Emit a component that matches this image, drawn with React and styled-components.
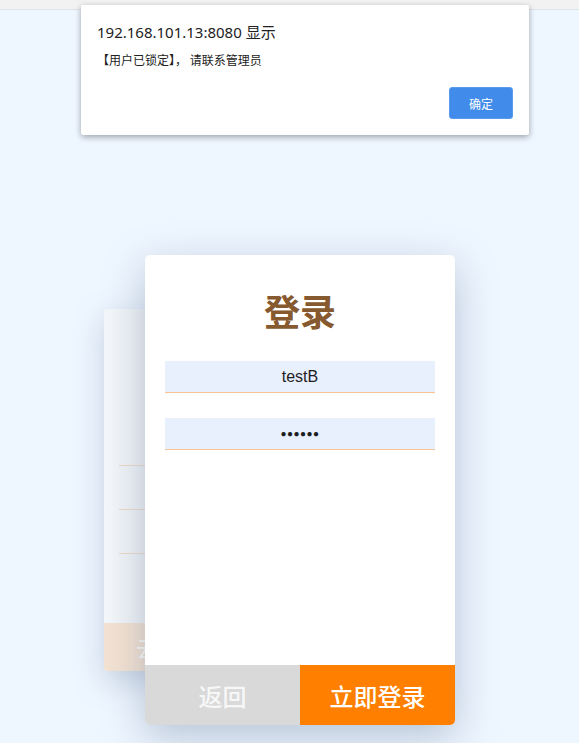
import styled, { createGlobalStyle } from "styled-components";

const GlobalStyle = createGlobalStyle`
  html, body {
    margin: 0;
    padding: 0;
    background: #eef6ff;
    font-family: "Noto Sans CJK SC", "Noto Sans", sans-serif;
  }
`;

const Page = styled.div`
  position: relative;
  width: 579px;
  height: 743px;
  overflow: hidden;
  background: #eef6ff;
`;

const TopStrip = styled.div`
  height: 9px;
  background: #f2f2f2;
  border-bottom: 1px solid #dfe3e8;
`;

const Stage = styled.div`
  display: grid;
  padding: 245px 0 0 104px;
`;

const BackCard = styled.div`
  grid-area: 1 / 1;
  margin-top: 54px;
  width: 300px;
  height: 362px;
  border-radius: 4px;
  overflow: hidden;
  display: flex;
  flex-direction: column;
  background: linear-gradient(90deg, #f4f7fa 0%, #dfe4e9 40%, #dce1e6 100%);
  box-shadow: 0 10px 30px rgba(120, 140, 165, 0.35);
`;

const BackLines = styled.div`
  flex: 1;
  padding: 156px 0 0 15px;
  display: flex;
  flex-direction: column;
  gap: 43px;
`;

const BackLine = styled.div`
  height: 1px;
  width: 200px;
  background: #efd9c4;
`;

const BackFooter = styled.div`
  height: 48px;
  background: linear-gradient(90deg, #f3e2d2 0%, #ead8c8 100%);
  color: rgba(255, 255, 255, 0.85);
  font-size: 24px;
  line-height: 48px;
  padding-left: 32px;
`;

const Card = styled.div`
  grid-area: 1 / 1;
  margin-left: 41px;
  width: 310px;
  height: 470px;
  background: #fff;
  border-radius: 5px;
  overflow: hidden;
  display: flex;
  flex-direction: column;
  box-shadow: 0 12px 40px rgba(100, 120, 150, 0.4);
`;

const Title = styled.h1`
  margin: 30px 0 0;
  text-align: center;
  font-size: 36px;
  line-height: 50px;
  font-weight: 700;
  color: #87592f;
`;

const Fields = styled.div`
  flex: 1;
  display: flex;
  flex-direction: column;
  gap: 25px;
  padding: 26px 20px 0;
`;

const Field = styled.div`
  height: 31px;
  background: #e8f0fe;
  border-bottom: 1px solid #f8c390;
  text-align: center;
  font-family: "Liberation Sans", Arial, sans-serif;
  font-size: ${(p) => (p.$dots ? "10px" : "16px")};
  line-height: 31px;
  color: #1e1e1e;
  letter-spacing: ${(p) => (p.$dots ? "0.5px" : "0")};
`;

const Actions = styled.div`
  display: grid;
  grid-template-columns: 1fr 1fr;
  height: 60px;
`;

const ActionButton = styled.button`
  border: none;
  margin: 0;
  padding: 0;
  font-family: "Noto Sans CJK SC", sans-serif;
  font-size: 24px;
  font-weight: 500;
  color: ${(p) => (p.$primary ? "#fff" : "#f7f7f7")};
  background: ${(p) => (p.$primary ? "#ff7f00" : "#d9d9d9")};
`;

const Dialog = styled.div`
  position: absolute;
  left: 81px;
  top: 5px;
  width: 448px;
  height: 130px;
  box-sizing: border-box;
  background: #fff;
  border-radius: 2px;
  box-shadow: 0 2px 6px rgba(0, 0, 0, 0.35);
  padding: 17px 16px 16px;
  display: flex;
  flex-direction: column;
`;

const DialogTitle = styled.div`
  font-family: "Noto Sans", "Noto Sans CJK SC", sans-serif;
  font-size: 15px;
  line-height: 20px;
  color: #222;
`;

const DialogMessage = styled.div`
  margin-top: 9px;
  font-size: 12px;
  line-height: 18px;
  color: #222;
`;

const DialogFooter = styled.div`
  margin-top: auto;
  display: flex;
  justify-content: flex-end;
`;

const OkButton = styled.button`
  width: 64px;
  height: 32px;
  border: 1px solid #5b9bee;
  border-radius: 3px;
  background: #418bea;
  color: #fff;
  font-family: "Noto Sans CJK SC", sans-serif;
  font-size: 12px;
  padding: 0;
`;

export default function App() {
  return (
    <>
      <GlobalStyle />
      <Page>
        <TopStrip />
        <Stage>
          <BackCard>
            <BackLines>
              <BackLine />
              <BackLine />
              <BackLine />
            </BackLines>
            <BackFooter>去注册</BackFooter>
          </BackCard>
          <Card>
            <Title>登录</Title>
            <Fields>
              <Field>testB</Field>
              <Field $dots>●●●●●●</Field>
            </Fields>
            <Actions>
              <ActionButton>返回</ActionButton>
              <ActionButton $primary>立即登录</ActionButton>
            </Actions>
          </Card>
        </Stage>
        <Dialog>
          <DialogTitle>192.168.101.13:8080 显示</DialogTitle>
          <DialogMessage>【用户已锁定】， 请联系管理员</DialogMessage>
          <DialogFooter>
            <OkButton>确定</OkButton>
          </DialogFooter>
        </Dialog>
      </Page>
    </>
  );
}
